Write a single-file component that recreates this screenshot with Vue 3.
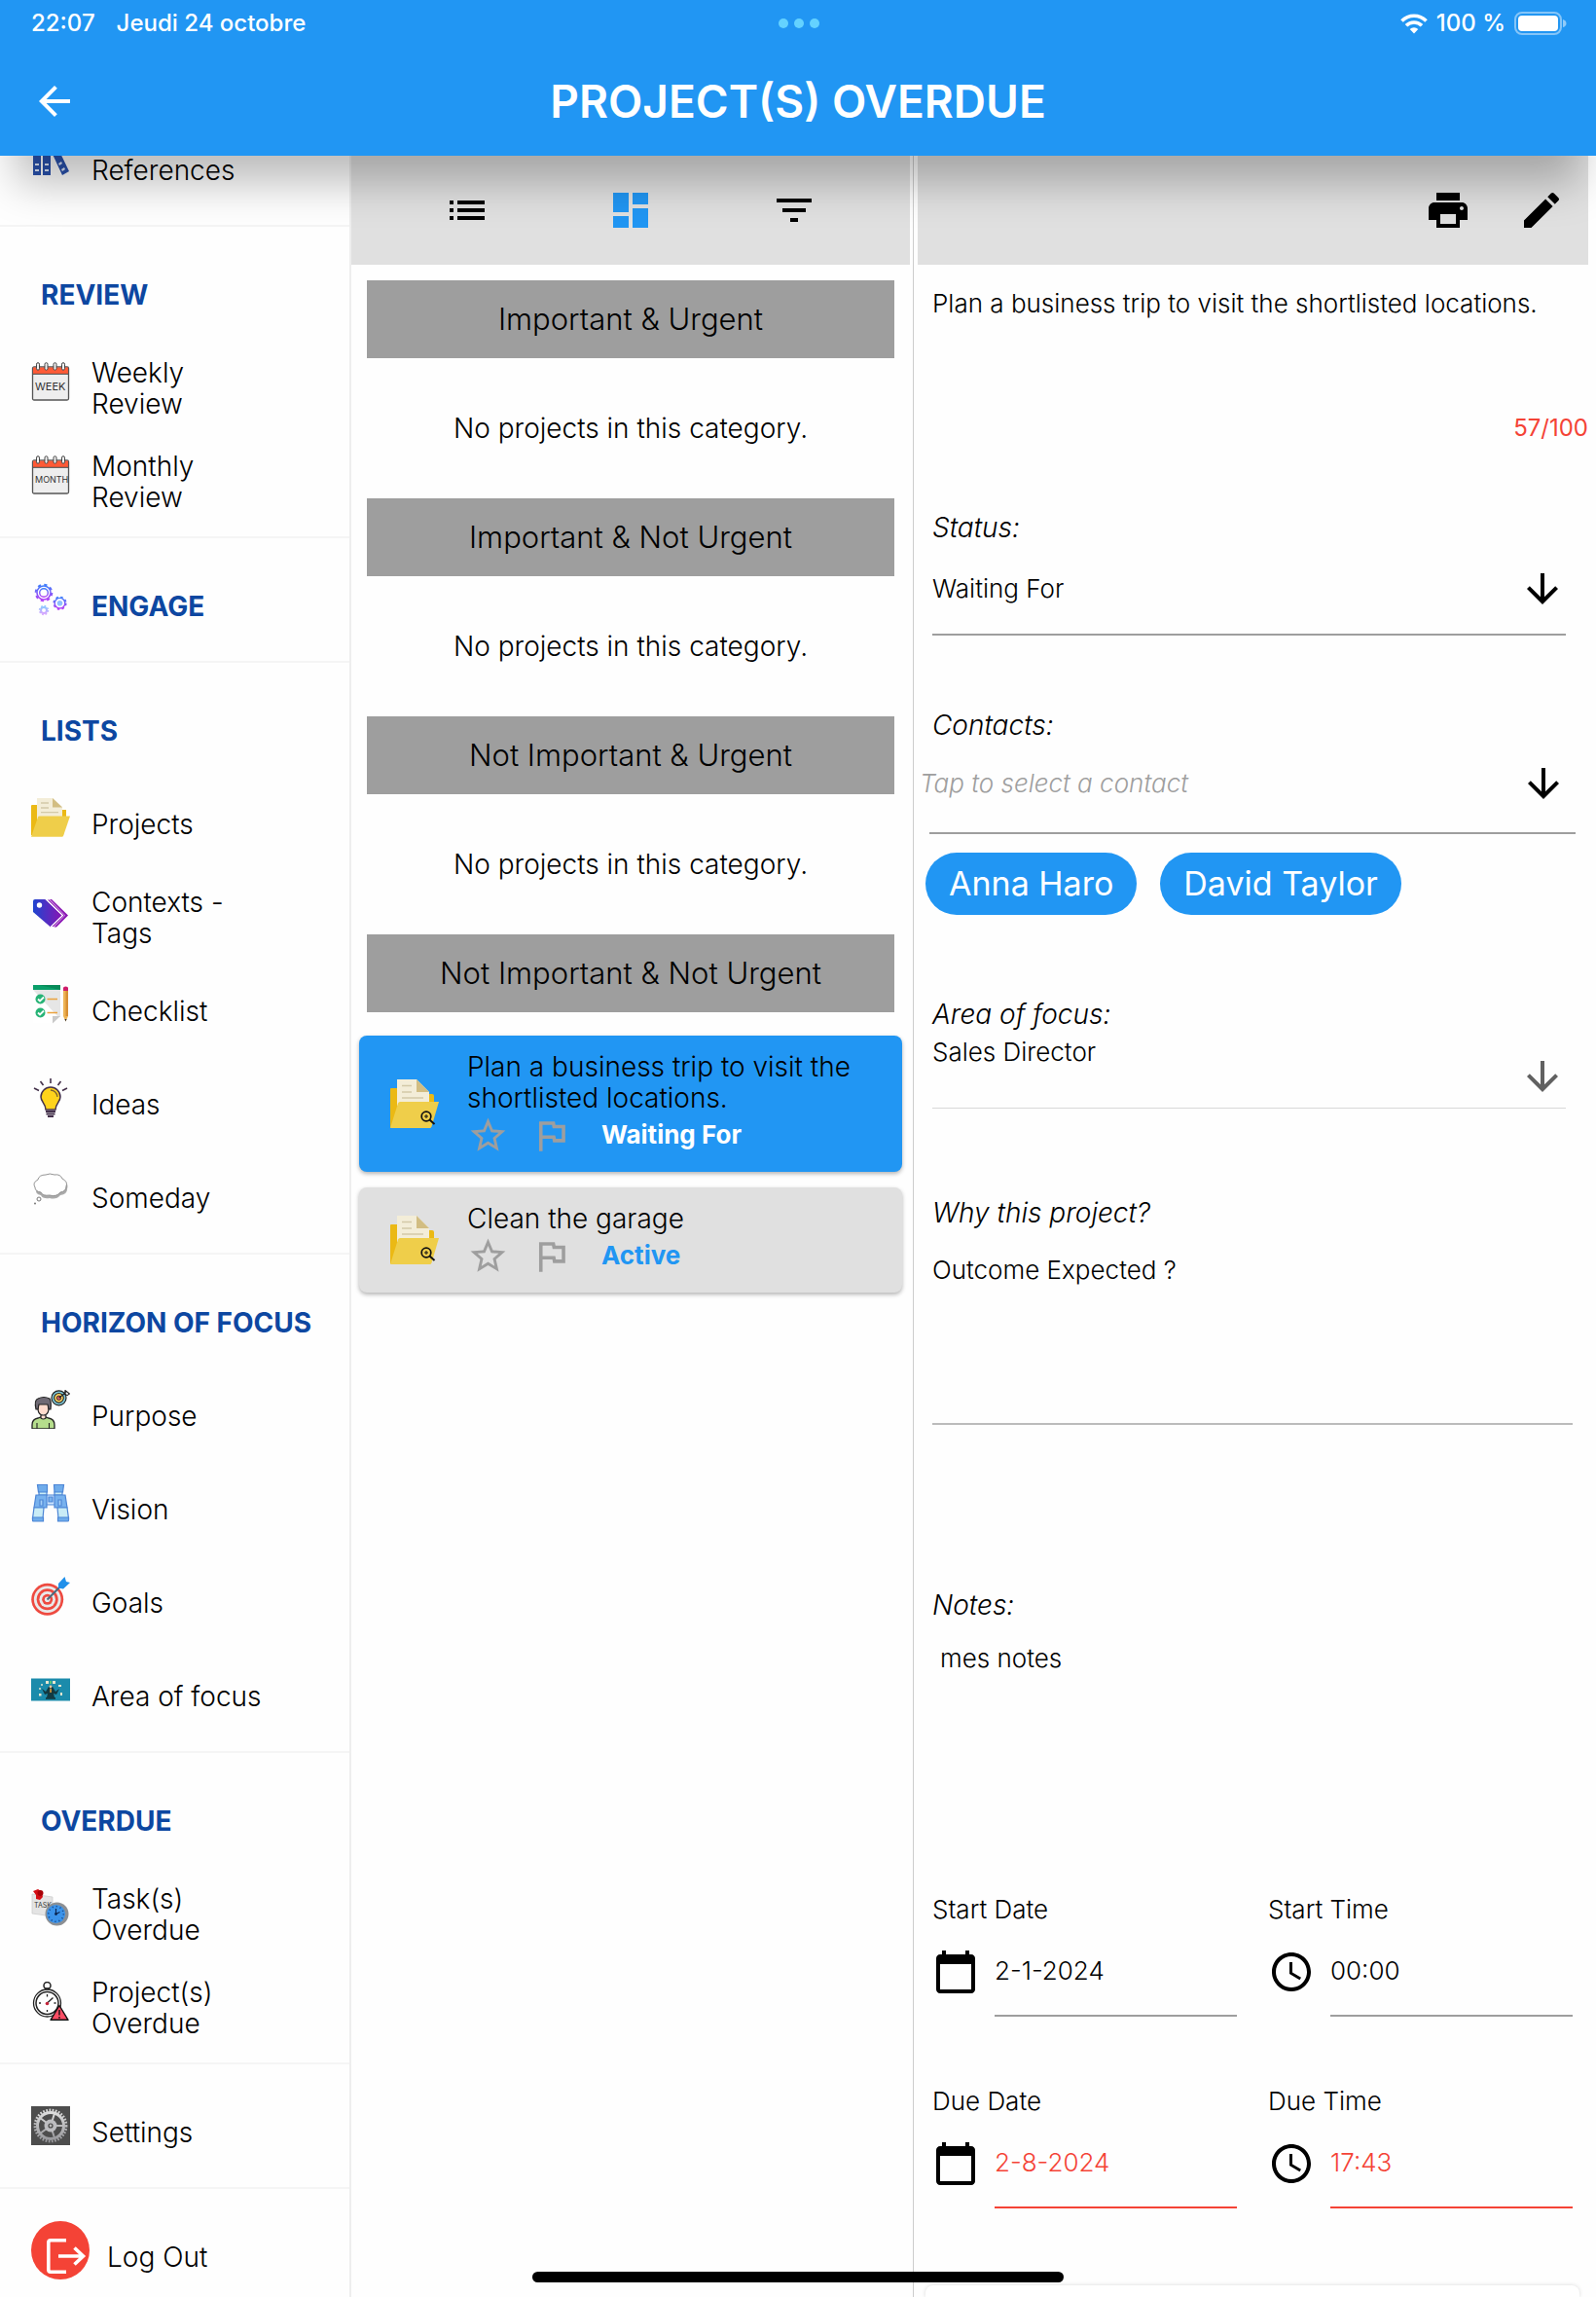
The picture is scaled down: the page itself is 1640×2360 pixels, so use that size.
<script setup>
import { ref, computed } from 'vue'

const sections = [
  { items: [{ icon: 'books', label: 'References' }] },
  {
    title: 'REVIEW',
    items: [
      { icon: 'calendar-page', label: 'Weekly\nReview', mark: { text: 'WEEK', x: 4, y: 29, size: 11 } },
      { icon: 'calendar-page', label: 'Monthly\nReview', mark: { text: 'MONTH', x: 4, y: 28, size: 9 } },
    ],
  },
  { lead: true, items: [{ icon: 'gears', label: 'ENGAGE', strong: true }] },
  {
    title: 'LISTS',
    items: [
      { icon: 'folder', label: 'Projects' },
      { icon: 'tags', label: 'Contexts -\nTags' },
      { icon: 'checklist', label: 'Checklist' },
      { icon: 'bulb', label: 'Ideas' },
      { icon: 'cloud', label: 'Someday' },
    ],
  },
  {
    title: 'HORIZON OF FOCUS',
    items: [
      { icon: 'purpose', label: 'Purpose' },
      { icon: 'binoculars', label: 'Vision' },
      { icon: 'target', label: 'Goals' },
      { icon: 'area', label: 'Area of focus' },
    ],
  },
  {
    title: 'OVERDUE',
    items: [
      { icon: 'note', label: 'Task(s)\nOverdue', mark: { text: 'TASK', x: 3, y: 20, size: 7 }, badge: 'note-clock' },
      { icon: 'stopwatch', label: 'Project(s)\nOverdue' },
    ],
  },
  { lead: true, items: [{ icon: 'settings', label: 'Settings' }] },
  { lead: true, items: [{ icon: 'logout', label: 'Log Out', large: true }] },
]

const emptyQuadrants = ['Important & Urgent', 'Important & Not Urgent', 'Not Important & Urgent']

const projects = [
  { name: 'Plan a business trip to visit the shortlisted locations.', status: 'Waiting For', selected: true },
  { name: 'Clean the garage', status: 'Active', selected: false },
]

const title = ref('Plan a business trip to visit the shortlisted locations.')
const savedLength = 57
const counter = computed(() => `${savedLength}/100`)
const status = ref('Waiting For')
const contact = ref('')
const contacts = ['Anna Haro', 'David Taylor']
const area = ref('Sales Director')
const outcome = ref('Outcome Expected ?')
const notes = ref('mes notes')

const schedule = ref([
  { id: 'start-date', label: 'Start Date', icon: 'calendar', value: '2-1-2024' },
  { id: 'start-time', label: 'Start Time', icon: 'clock', value: '00:00' },
  { id: 'due-date', label: 'Due Date', icon: 'calendar', value: '2-8-2024', late: true },
  { id: 'due-time', label: 'Due Time', icon: 'clock', value: '17:43', late: true },
])
</script>

<template>
  <div class="app">
    <svg class="sprite" aria-hidden="true">
      <defs>
        <linearGradient id="g-gear" x1="0" y1="0" x2="0" y2="1">
          <stop offset="0" stop-color="#3f7dfb" /><stop offset="1" stop-color="#b53df5" />
        </linearGradient>
        <linearGradient id="g-gear-soft" x1="0" y1="0" x2="0" y2="1">
          <stop offset="0" stop-color="#8fc6ff" /><stop offset="1" stop-color="#d6a6ff" />
        </linearGradient>
        <linearGradient id="g-tag" x1="0" y1="0" x2="1" y2="0">
          <stop offset="0" stop-color="#1f45cf" /><stop offset="1" stop-color="#8a14b4" />
        </linearGradient>
        <linearGradient id="g-metal" x1="0" y1="0" x2="0" y2="1">
          <stop offset="0" stop-color="#dcdcdc" /><stop offset="1" stop-color="#9a9a9e" />
        </linearGradient>
      </defs>

      <symbol id="i-books" viewBox="0 0 40 40">
        <g fill="#2a52ad">
          <path d="M2 0h8v32H2zM12 0h8v32h-8zM19 4l7-3 13 27-7 4z" />
        </g>
        <g fill="#dfe8fb">
          <path d="M4 20h4v2H4zM4 26h4v2H4zM14 20h4v2h-4zM14 26h4v2h-4zM28 20l3-2 1 2-3 2zM31 26l3-2 1 2-3 2z" />
        </g>
      </symbol>

      <symbol id="i-calendar-page" viewBox="0 0 40 40">
        <rect x="1.5" y="5" width="37" height="34" rx="1.5" fill="#eee" stroke="#555" stroke-width="1.3" />
        <path d="M2 5.500h36V12H2z" fill="#ff5a36" />
        <path d="M2 12.300h36" stroke="#444" stroke-width="1" />
        <g fill="#f4f4f4" stroke="#444" stroke-width="1">
          <rect x="5.500" y=".7" width="3" height="7.500" rx="1.500" />
          <rect x="14" y=".7" width="3" height="7.500" rx="1.500" />
          <rect x="23" y=".7" width="3" height="7.500" rx="1.500" />
          <rect x="31.500" y=".7" width="3" height="7.500" rx="1.500" />
        </g>
      </symbol>

      <symbol id="i-gears" viewBox="0 0 40 40">
        <g fill="none" stroke="url(#g-gear)">
          <circle cx="13" cy="13" r="7" stroke-width="1.600" />
          <circle cx="13" cy="13" r="8.300" stroke-width="2" stroke-dasharray="3.200 3.320" />
          <circle cx="13" cy="13" r="4.300" stroke-width="1.400" />
          <circle cx="29.500" cy="23.700" r="5.300" stroke-width="1.400" />
          <circle cx="29.500" cy="23.700" r="6.300" stroke-width="1.600" stroke-dasharray="2.500 2.450" />
        </g>
        <circle cx="29.500" cy="23.700" r="2.800" fill="#8fc0ff" />
        <g fill="none" stroke="url(#g-gear-soft)">
          <circle cx="13" cy="31" r="3" stroke-width="2" />
          <circle cx="13" cy="31" r="4.400" stroke-width="1.600" stroke-dasharray="1.700 1.750" />
        </g>
      </symbol>

      <symbol id="i-folder" viewBox="0 0 40 40">
        <path d="M0 8q0-1 1-1h5v5h30v10L33 38H0z" fill="#ebb914" />
        <path d="M6 0h16l10 9v13H6z" fill="#f3edd8" />
        <path d="M22 0l10 9.500H22z" fill="#d2bd82" />
        <path d="M10 5h8M10 10h8M10 14.700h18" stroke="#d3c9a8" stroke-width="1.300" fill="none" />
        <path d="M8.500 18.500H40L33 39q-.4.700-1.200.7H0L7 19.500q.4-1 1.500-1z" fill="#efce4a" />
      </symbol>
      <symbol id="i-folder-zoom" viewBox="0 0 50 50">
        <path d="M0 10q0-1 1-1h7v6h35q2 0 2 2v14L40 49H0z" fill="#ebb914" />
        <path d="M7 0h20l13 13v14H7z" fill="#f3edd8" />
        <path d="M27 0l13 13H27z" fill="#d2bd82" />
        <path d="M12 6.500h10M12 13h10M12 19h22" stroke="#d3c9a8" stroke-width="1.700" fill="none" />
        <path d="M10 23h40l-7.500 25.500q-.5 1.500-2 1.500H0l8-25.500Q8.500 23 10 23z" fill="#efce4a" />
        <g fill="none" stroke="#111"><circle cx="37" cy="38" r="4.800" stroke-width="1.700" /><path d="M40.500 41.500l5 4.500" stroke-width="2" /><path d="M37 36v4M35 38h4" stroke-width="1" /></g>
      </symbol>

      <symbol id="i-tags" viewBox="0 0 40 40">
        <path d="M4 8h10.500L32 24.500 20 36.500 2 21V10q0-2 2-2z" fill="url(#g-tag)" />
        <circle cx="8.500" cy="14" r="2.700" fill="#fff" />
        <path d="M15.500 8h3.500l16.500 16.500-12 12h-2.500l-.5-.5L32.500 24.500z" fill="#8a14b4" stroke="#fff" stroke-width="1.200" />
        <path d="M19 8h2L38 24.500l-12 12h-2.500L35 24.500z" fill="#8a14b4" />
      </symbol>

      <symbol id="i-checklist" viewBox="0 0 40 40">
        <path d="M2 4h28v28l-8 7H2z" fill="#fff" />
        <path d="M2 5h28v28H28z" fill="#e6e6e6" />
        <path d="M22 32h8l-8 7.500z" fill="#c9c9c9" />
        <path d="M2 0h28v5H2z" fill="#0a9f6a" /><path d="M8 0h22v5z" fill="#078a58" />
        <g fill="#27b376"><circle cx="9.500" cy="14.500" r="5" /><circle cx="9.500" cy="28.500" r="5" /></g>
        <path d="M7 14.500l2 2 4-4M7 28.500l2 2 4-4" fill="none" stroke="#fff" stroke-width="1.800" />
        <path d="M16.500 14.500H27M16.500 28.500H27" stroke="#eaa23f" stroke-width="1.400" />
        <path d="M33 6h5v26l-2.500 5.500L33 32z" fill="#eeb455" /><path d="M35.500 6H38v26h-2.500z" fill="#d88f34" />
        <path d="M33 6V3q0-1.500 2.500-1.500T38 3v3z" fill="#cf1c6a" /><path d="M34.500 35h2l-1 2.500z" fill="#333" />
      </symbol>

      <symbol id="i-bulb" viewBox="0 0 40 40">
        <path d="M20 0v5M9.500 3l3 4M30.500 3l-3 4M3 10l5 2.500M37 10l-5 2.500" stroke="#43304a" stroke-width="1.600" />
        <path d="M20 9a10 10 0 0 0-10 10c0 5 5 7 5 13h10c0-6 5-8 5-13A10 10 0 0 0 20 9z" fill="#ffd31c" stroke="#43304a" stroke-width="1.500" />
        <path d="M20 12q6 .5 7 7" fill="none" stroke="#7d6330" stroke-width="1.300" />
        <path d="M15 34h10M15.500 36.500h9M17 39h6" stroke="#43304a" stroke-width="1.900" />
      </symbol>

      <symbol id="i-cloud" viewBox="0 0 40 40">
        <path d="M5 18q-3-5 3-8 1-5 8-5 4-4 9 0 6-1 8 4 6 3 4 9 0 5-7 6-4 5-11 3-7 1-9-3-6-1-5-6z" fill="#555" opacity=".5" />
        <path d="M4 16q-3-5 3-8 1-5 8-5 4-2 9 0 6-1 8 4 6 3 4 8 0 5-6 6-4 5-11 3-7 1-9-3-6-1-6-5z" fill="#fff" stroke="#888" stroke-width=".9" />
        <circle cx="8" cy="28" r="2" fill="#fff" stroke="#777" stroke-width="1" /><circle cx="4" cy="32.500" r="1" fill="#777" />
      </symbol>

      <symbol id="i-purpose" viewBox="0 0 40 40">
        <path d="M1 40v-4q0-6 6-7l3-1h5l3 1q6 1 6 7v4z" fill="#b5dd8c" stroke="#222" stroke-width="1.300" />
        <path d="M6 34v6M18.500 34v6" stroke="#222" stroke-width="1.100" />
        <path d="M7 14h11v6q-.5 6-5.500 6T7 20zM10 25v4q2.500 2 5 0v-4" fill="#ffdccd" stroke="#222" stroke-width="1.200" />
        <path d="M5 20q-2-10 2-11 6-3 12 0 2 3 1 11h-2l-1-5H8l-1 5z" fill="#6f6a74" stroke="#222" stroke-width="1.200" />
        <circle cx="28.500" cy="8.300" r="7.500" fill="#7fc8d8" stroke="#222" stroke-width="1.200" />
        <circle cx="28.500" cy="8.300" r="4.800" fill="#ffd45c" stroke="#222" stroke-width="1.100" />
        <circle cx="28.500" cy="8.300" r="2.200" fill="#e4636c" stroke="#222" stroke-width=".9" />
        <path d="M28.500 8.300L36 2.500M34.500 4l.5-3.500 2.500 2L39.500 4l-2.500 1.700z" fill="#fff" stroke="#222" stroke-width="1.100" />
      </symbol>

      <symbol id="i-binoculars" viewBox="0 0 40 40">
        <g stroke="#4d86d6" stroke-width="1.200">
          <path d="M14 12h12v10H14z" fill="#cfe6ff" /><path d="M18 14h4v5h-4z" fill="#7bb4ee" />
          <path d="M6.500 1.500h10V9q-5 2-9 0zM23.500 1.500h10L32.500 9q-4 2-8.500 0z" fill="#6faceb" />
          <path d="M8 9h8v3H8zM24 9h8v3h-8z" fill="#c9ecf6" />
          <path d="M5 12h11v13H3zM24 12h11l2 13H24z" fill="#78b2ee" />
          <path d="M3 25h10l-1 11H1.500zM27 25h10l1.500 11H28z" fill="#c9ecf6" />
          <path d="M1.500 35h11v4h-10q-1 0-1-1zM27.500 35h11v3q0 1-1 1h-10z" fill="#6faceb" />
          <path d="M9 17h3v6H9zM28 17h3v6h-3z" fill="#a5d0f7" />
        </g>
      </symbol>

      <symbol id="i-target" viewBox="0 0 40 40">
        <circle cx="16.700" cy="23.300" r="16.500" fill="#ee4a40" /><circle cx="16.700" cy="23.300" r="13.800" fill="#e9e9ea" />
        <circle cx="16.700" cy="23.300" r="11" fill="#ee4a40" /><circle cx="16.700" cy="23.300" r="8.300" fill="#e9e9ea" />
        <circle cx="16.700" cy="23.300" r="5.500" fill="#ee4a40" /><circle cx="16.700" cy="23.300" r="2.800" fill="#e9e9ea" />
        <path d="M16.500 23.500L32 8" stroke="#4a6b80" stroke-width="1.900" />
        <path d="M28 7l6.500-7L36 5l4 1-7 6.500-5-1z" fill="#2090ea" />
      </symbol>

      <symbol id="i-area" viewBox="0 0 40 40">
        <path d="M0 8.500h40v23H0z" fill="#1b8bab" />
        <g fill="#e8e6cf"><path d="M15 11h3v3h-3zM22 11h3v3h-3zM28 15h3v2h-3zM8 24h2.500v2.500H8zM30 23h2v3h-2z" /><circle cx="11" cy="15" r="1" /><circle cx="9" cy="19" r="1" /></g>
        <path d="M19 11h2v3h-2z" fill="#55c47a" />
        <path d="M18 17h4l3 5 4-3-3 6-3-1 1 4h-8l1-4-3 1-3-6 4 3z" fill="#123a42" /><path d="M15 28h10v1.800H15z" fill="#123a42" />
        <circle cx="20" cy="17" r="1.400" fill="#f0c39a" /><path d="M19.300 19h1.500v4h-1.500z" fill="#e9a13a" />
      </symbol>

      <symbol id="i-note" viewBox="0 0 40 40">
        <path d="M1 6l21 3v20L1 26z" fill="#e4e4e4" stroke="#c8c8c8" stroke-width=".7" />
      </symbol>
      <symbol id="i-note-clock" viewBox="0 0 40 40">
        <circle cx="26.500" cy="26.500" r="12" fill="#8c8f93" /><circle cx="25.500" cy="26.500" r="9.500" fill="#3b93ea" />
        <circle cx="25.500" cy="26.500" r="7.800" fill="none" stroke="#123c78" stroke-width="1.600" stroke-dasharray="1 3.080" />
        <path d="M25.500 26.500V21M25.500 26.500l4-2" stroke="#0a2550" stroke-width="1.200" /><circle cx="25.500" cy="26.500" r="1.400" fill="#0a2550" />
        <path d="M2 3l5-2 5 3-1 2 1 3-3 3-4-1 0-4z" fill="#d50d14" /><circle cx="9.500" cy="5" r="3" fill="#a80007" />
      </symbol>

      <symbol id="i-stopwatch" viewBox="0 0 40 40">
        <g fill="none" stroke="#222"><circle cx="16.500" cy="4" r="3.500" stroke-width="1.500" /><circle cx="16.500" cy="22" r="14" stroke-width="1.300" /><circle cx="16.500" cy="22" r="11.500" stroke-width="1.500" />
          <path d="M14 7h5M16.500 13v2.500M16.500 29v2M8 22h2M23.500 22h2M16.500 22l6-5.500" stroke-width="1.300" /></g>
        <circle cx="16.500" cy="22.500" r="1.800" fill="#c22439" />
        <path d="M29 24.500L38 39.300H20z" fill="#fb4d64" stroke="#111" stroke-width="1.400" stroke-linejoin="round" />
        <path d="M29 29v5.500M29 36v1.700" stroke="#111" stroke-width="1.400" />
      </symbol>

      <symbol id="i-settings" viewBox="0 0 40 40">
        <path d="M0 0h40v40H0z" fill="#4d4d4d" />
        <g fill="none" stroke="url(#g-metal)"><circle cx="20" cy="20" r="13.500" stroke-width="3" /><circle cx="20" cy="20" r="16" stroke-width="2.800" stroke-dasharray="1.700 1.490" />
          <path d="M20.100 20L33 20.100M20 20l4-12.500M20 20L9.500 12.300M20 20L9.500 27.700M20 20l4 12.500" stroke-width="2" /></g>
        <circle cx="20" cy="20" r="6.500" fill="#bdbdc0" /><circle cx="20" cy="20" r="2" fill="#bbb" stroke="#444" stroke-width="1.200" />
      </symbol>

      <symbol id="i-logout" viewBox="0 0 60 60">
        <circle cx="30" cy="30" r="30" fill="#f44336" />
        <path d="M36 19.800H20q-2.200 0-2.200 2.200v28q0 2.200 2.200 2.200h16M28 36h25M44.500 27.500L53.500 36l-9 8.500" fill="none" stroke="#fff" stroke-width="3.600" />
      </symbol>

      <symbol id="i-back" viewBox="0 0 24 24"><path d="M20 11H7.830l5.590-5.590L12 4l-8 8 8 8 1.410-1.410L7.830 13H20z" /></symbol>
      <symbol id="i-down" viewBox="0 0 24 24"><path d="M20 12l-1.410-1.410L13 16.170V4h-2v12.170l-5.580-5.590L4 12l8 8z" /></symbol>
      <symbol id="i-list" viewBox="0 0 24 24"><path d="M3 13h2v-2H3zm0 4h2v-2H3zm0-8h2V7H3zm4 4h14v-2H7zm0 4h14v-2H7zM7 7v2h14V7z" /></symbol>
      <symbol id="i-board" viewBox="0 0 24 24"><path d="M3 13h8V3H3zm0 8h8v-6H3zm10 0h8V11h-8zm0-18v6h8V3z" /></symbol>
      <symbol id="i-filter" viewBox="0 0 24 24"><path d="M10 18h4v-2h-4zM3 6v2h18V6zm3 7h12v-2H6z" /></symbol>
      <symbol id="i-print" viewBox="0 0 24 24"><path d="M19 8H5c-1.660 0-3 1.340-3 3v6h4v4h12v-4h4v-6c0-1.660-1.340-3-3-3zm-3 11H8v-5h8zm3-7c-.55 0-1-.45-1-1s.45-1 1-1 1 .45 1 1-.45 1-1 1zm-1-9H6v4h12z" /></symbol>
      <symbol id="i-edit" viewBox="0 0 24 24"><path d="M3 17.250V21h3.750L17.810 9.940l-3.750-3.750zM20.710 7.040c.39-.39.39-1.020 0-1.410l-2.340-2.340c-.39-.39-1.020-.39-1.410 0l-1.830 1.830 3.750 3.750z" /></symbol>
      <symbol id="i-star" viewBox="0 0 24 24"><path d="M22 9.240l-7.190-.62L12 2 9.190 8.630 2 9.240l5.460 4.730L5.820 21 12 17.270 18.180 21l-1.630-7.030zM12 15.400l-3.760 2.270 1-4.280-3.320-2.880 4.380-.38L12 6.100l1.710 4.040 4.380.38-3.320 2.880 1 4.280z" /></symbol>
      <symbol id="i-flag" viewBox="0 0 24 24"><path d="M12.360 6l.4 2H18v6h-3.360l-.4-2H7V6zM14 4H5v17h2v-7h5.600l.4 2h7V6h-5.600z" fill-rule="evenodd" /></symbol>
      <symbol id="i-calendar" viewBox="0 0 24 24"><path d="M20 3h-1V1h-2v2H7V1H5v2H4c-1.100 0-2 .9-2 2v16c0 1.100.9 2 2 2h16c1.100 0 2-.9 2-2V5c0-1.100-.9-2-2-2zm0 18H4V8h16z" /></symbol>
      <symbol id="i-clock" viewBox="0 0 24 24"><path d="M11.990 2C6.470 2 2 6.480 2 12s4.470 10 9.990 10C17.520 22 22 17.520 22 12S17.520 2 11.990 2zM12 20c-4.420 0-8-3.580-8-8s3.580-8 8-8 8 3.580 8 8-3.580 8-8 8zm.5-13H11v6l5.250 3.150.75-1.230-4.500-2.670z" /></symbol>
    </svg>

    <header class="topbar">
      <div class="statusbar">
        <div class="status-left"><span>22:07</span><span>Jeudi 24 octobre</span></div>
        <div class="dots"><i></i><i></i><i></i></div>
        <div class="status-right">
          <svg class="wifi" viewBox="0 0 28 21" aria-hidden="true">
            <g fill="none" stroke="#fff" stroke-width="3.600"><path d="M1.500 7.500a17.500 17.500 0 0 1 25 0" /><path d="M6 12.300a11.300 11.300 0 0 1 16 0" /></g>
            <path d="M14 20.500l-4.300-4.600a6.200 6.200 0 0 1 8.600 0z" fill="#fff" />
          </svg>
          <span>100 %</span>
          <svg class="battery" viewBox="0 0 54 24" aria-hidden="true">
            <rect x="1" y="1" width="47" height="22" rx="7" fill="none" stroke="#fff" stroke-opacity=".45" stroke-width="2" />
            <rect x="4" y="4" width="41" height="16" rx="4" fill="#fff" />
            <path d="M50 8q3.500 1 3.500 4T50 16z" fill="#fff" fill-opacity=".5" />
          </svg>
        </div>
      </div>
      <div class="titlebar">
        <button class="icon-btn" type="button" aria-label="Back"><svg><use href="#i-back" /></svg></button>
        <h1>PROJECT(S) OVERDUE</h1>
      </div>
    </header>

    <div class="columns">
      <nav class="sidebar">
        <section v-for="(section, i) in sections" :key="i" class="group" :class="{ scrolled: i === 0, lead: section.lead || section.title }">
          <h2 v-if="section.title">{{ section.title }}</h2>
          <a v-for="item in section.items" :key="item.label" href="#" class="nav-item" :class="{ strong: item.strong, large: item.large }">
            <svg aria-hidden="true">
              <use :href="'#i-' + item.icon" />
              <text v-if="item.mark" class="mark" :x="item.mark.x" :y="item.mark.y" :font-size="item.mark.size">{{ item.mark.text }}</text>
              <use v-if="item.badge" :href="'#i-' + item.badge" />
            </svg>
            <span>{{ item.label }}</span>
          </a>
        </section>
      </nav>

      <main class="board">
        <div class="toolbar views">
          <button class="icon-btn" type="button" aria-label="List view"><svg><use href="#i-list" /></svg></button>
          <button class="icon-btn active" type="button" aria-label="Matrix view"><svg><use href="#i-board" /></svg></button>
          <button class="icon-btn" type="button" aria-label="Filter"><svg><use href="#i-filter" /></svg></button>
        </div>
        <section v-for="name in emptyQuadrants" :key="name" class="quadrant">
          <h3>{{ name }}</h3>
          <p>No projects in this category.</p>
        </section>
        <section class="quadrant">
          <h3>Not Important &amp; Not Urgent</h3>
          <div class="cards">
            <article v-for="p in projects" :key="p.name" class="card" :class="{ selected: p.selected }">
              <svg class="card-icon" aria-hidden="true"><use href="#i-folder-zoom" /></svg>
              <div class="card-body">
                <h4>{{ p.name }}</h4>
                <div class="card-meta">
                  <button type="button" aria-label="Favourite"><svg><use href="#i-star" /></svg></button>
                  <button type="button" aria-label="Flag"><svg><use href="#i-flag" /></svg></button>
                  <strong>{{ p.status }}</strong>
                </div>
              </div>
            </article>
          </div>
        </section>
      </main>

      <aside class="details">
        <div class="toolbar actions">
          <button class="icon-btn" type="button" aria-label="Print"><svg><use href="#i-print" /></svg></button>
          <button class="icon-btn" type="button" aria-label="Edit"><svg><use href="#i-edit" /></svg></button>
        </div>
        <form class="form" @submit.prevent>
          <textarea v-model="title" class="title-field" aria-label="Project title"></textarea>
          <output class="counter">{{ counter }}</output>

          <label class="caption status-caption" for="status">Status:</label>
          <div class="pick status-pick">
            <select id="status" v-model="status"><option>Waiting For</option><option>Active</option></select>
            <svg aria-hidden="true"><use href="#i-down" /></svg>
          </div>

          <label class="caption contact-caption" for="contact">Contacts:</label>
          <div class="pick contact-pick">
            <input id="contact" v-model="contact" type="text" placeholder="Tap to select a contact" />
            <svg aria-hidden="true"><use href="#i-down" /></svg>
          </div>
          <div class="chips">
            <button v-for="c in contacts" :key="c" type="button">{{ c }}</button>
          </div>

          <label class="caption area-caption" for="area">Area of focus:</label>
          <div class="pick area-pick">
            <select id="area" v-model="area"><option>Sales Director</option></select>
            <svg aria-hidden="true"><use href="#i-down" /></svg>
          </div>

          <label class="caption why-caption" for="why">Why this project?</label>
          <textarea id="why" v-model="outcome" class="why-field"></textarea>

          <label class="caption notes-caption" for="notes">Notes:</label>
          <textarea id="notes" v-model="notes" class="notes-field"></textarea>

          <div class="schedule">
            <div v-for="s in schedule" :key="s.id" class="slot" :class="{ late: s.late }">
              <label :for="s.id">{{ s.label }}</label>
              <div class="slot-row">
                <svg aria-hidden="true"><use :href="'#i-' + s.icon" /></svg>
                <input :id="s.id" v-model="s.value" type="text" />
              </div>
            </div>
          </div>
        </form>
        <div class="next-card"></div>
      </aside>
    </div>
    <div class="home-indicator"></div>
  </div>
</template>

<style>
body {
  margin: 0;
  background: #fff;
}
</style>

<style scoped>
.app,
.app * {
  box-sizing: border-box;
}
.app {
  position: relative;
  display: flex;
  flex-direction: column;
  height: 100vh;
  overflow: hidden;
  background: #fefefe;
  color: #000;
  font-family: Inter, "Open Sans", sans-serif;
  font-size: 26px;
  line-height: 32px;
}
.sprite {
  position: absolute;
  width: 0;
  height: 0;
}
h1, h2, h3, h4, p {
  margin: 0;
}
button, input, select, textarea {
  margin: 0;
  padding: 0;
  border: 0;
  background: none;
  color: inherit;
  font: inherit;
  appearance: none;
  border-radius: 0;
}
textarea {
  display: block;
  width: 100%;
  resize: none;
  overflow: hidden;
}
svg {
  display: block;
  flex: none;
  fill: currentColor;
}
.icon-btn,
.icon-btn svg {
  width: 48px;
  height: 48px;
}

/* Top bar */
.topbar {
  position: relative;
  z-index: 2;
  flex: none;
  height: 160px;
  background: #2196f3;
  color: #fff;
  box-shadow: 0 44px 44px -16px rgba(0, 0, 0, 0.26);
}
.statusbar {
  display: grid;
  grid-template-columns: 1fr auto 1fr;
  align-items: center;
  height: 48px;
  padding: 0 30px 0 32px;
  font-weight: 500;
  font-size: 24px;
}
.status-left,
.status-right,
.dots {
  display: flex;
  align-items: center;
}
.status-left {
  gap: 22px;
}
.status-right {
  justify-content: flex-end;
  gap: 9px;
}
.dots {
  gap: 6px;
}
.dots i {
  width: 10px;
  height: 10px;
  border-radius: 50%;
  background: #64d2ff;
}
.wifi {
  width: 28px;
  height: 21px;
}
.battery {
  width: 54px;
  height: 24px;
}
.titlebar {
  display: grid;
  grid-template-columns: 1fr auto 1fr;
  align-items: center;
  height: 112px;
  padding: 0 32px;
}
h1 {
  font-size: 46px;
  line-height: 56px;
  font-weight: 600;
}

/* Columns */
.columns {
  flex: 1;
  min-height: 0;
  display: grid;
  grid-template-columns: 361fr 578fr 701fr;
}
.columns > * {
  min-width: 0;
  overflow: hidden;
}

/* Sidebar */
.sidebar {
  border-right: 2px solid #eee;
}
.group {
  padding-bottom: 8px;
  border-bottom: 2px solid #f5f5f5;
}
.group.lead {
  padding-top: 22px;
}
.group.scrolled {
  margin-top: -33px;
}
.group:last-child {
  border-bottom: 0;
}
h2 {
  padding-left: 42px;
  color: #0d47a1;
  font-size: 28px;
  line-height: 96px;
  font-weight: 700;
  white-space: nowrap;
}
.nav-item {
  display: flex;
  align-items: center;
  gap: 22px;
  height: 96px;
  padding-left: 32px;
  color: #000;
  font-size: 28px;
  font-weight: 300;
  text-decoration: none;
  white-space: pre-line;
}
.nav-item svg {
  width: 40px;
  height: 40px;
  margin-bottom: 14px;
}
.mark {
  fill: #333;
  font-weight: 400;
}
.nav-item.strong {
  color: #0d47a1;
  font-weight: 700;
}
.nav-item.large {
  gap: 18px;
}
.nav-item.large svg {
  width: 60px;
  height: 60px;
}

/* Board */
.board {
  border-right: 1px solid #ccc;
}
.toolbar {
  display: flex;
  align-items: center;
  height: 112px;
  background: #e0e0e0;
}
.views {
  justify-content: center;
  gap: 120px;
  margin-right: 3px;
}
.icon-btn.active {
  color: #2196f3;
}
.quadrant h3 {
  margin: 16px 19px 0 16px;
  background: #9e9e9e;
  font-size: 31px;
  line-height: 80px;
  font-weight: 300;
  text-align: center;
}
.quadrant p {
  margin-right: 3px;
  font-size: 28px;
  line-height: 144px;
  font-weight: 300;
  text-align: center;
}
.quadrant + .quadrant h3 {
  margin-top: 0;
}
.cards {
  display: grid;
  gap: 16px;
  padding: 24px 11px 8px 8px;
}
.card {
  display: flex;
  align-items: center;
  gap: 29px;
  padding: 16px 32px;
  border-radius: 8px;
  background: #e0e0e0;
  box-shadow: 0 2px 4px rgba(0, 0, 0, 0.3);
}
.card-icon {
  width: 50px;
  height: 50px;
}
.card.selected {
  background: #2196f3;
}
h4 {
  font-size: 28px;
  font-weight: 300;
}
.card-meta {
  display: flex;
  align-items: center;
  height: 44px;
}
.card-meta button {
  margin-right: 22px;
  color: #9e9e9e;
}
.card-meta svg {
  width: 43px;
  height: 43px;
}
.card-meta strong {
  margin-left: 8px;
  color: #2196f3;
  font-weight: 700;
}
.card.selected strong {
  color: #fff;
}

/* Details */
.details {
  display: flex;
  flex-direction: column;
}
.actions {
  flex: none;
  justify-content: flex-end;
  gap: 48px;
  margin: 0 8px 0 4px;
  padding-right: 24px;
}
.form {
  flex: none;
  display: flex;
  flex-direction: column;
  padding: 0 24px 0 19px;
  font-weight: 300;
}
.title-field {
  height: 128px;
  margin-top: 24px;
}
.counter {
  align-self: flex-end;
  margin-right: -16px;
  color: #f44336;
  font-weight: 400;
  font-size: 24px;
}
.caption {
  font-size: 28px;
  font-style: italic;
}
.status-caption {
  margin-top: 70px;
}
.contact-caption {
  margin-top: 76px;
}
.area-caption {
  margin-top: 86px;
}
.why-caption {
  margin-top: 91px;
}
.notes-caption {
  margin-top: 169px;
}
.pick {
  display: grid;
  border-bottom: 2px solid #9e9e9e;
}
.pick > * {
  grid-area: 1 / 1;
  min-width: 0;
}
.pick > svg {
  place-self: center end;
  width: 48px;
  height: 48px;
  pointer-events: none;
}
.status-pick {
  height: 95px;
  margin-right: 7px;
}
.contact-pick {
  height: 96px;
  margin: 0 -3px;
  padding: 0 9px 6px 0;
}
.contact-pick input {
  margin-left: -10px;
  font-style: italic;
}
.contact-pick input::placeholder {
  color: #9e9e9e;
  opacity: 1;
}
.area-pick {
  height: 81px;
  margin-right: 7px;
  border-bottom: 1px solid #d8d8d8;
}
.area-pick select {
  padding-bottom: 34px;
}
.area-pick svg {
  align-self: end;
  margin-bottom: 8px;
  color: #616161;
}
.chips {
  display: flex;
  gap: 24px;
  margin: 19px 0 0 -7px;
}
.chips button {
  height: 64px;
  padding: 0 24px;
  border-radius: 32px;
  background: #2196f3;
  color: #fff;
  font-size: 34px;
  font-weight: 400;
}
.why-field {
  height: 175px;
  margin-top: 27px;
  border-bottom: 2px solid #bbb;
}
.notes-field {
  height: 140px;
  margin-top: 23px;
  padding-left: 8px;
}
.schedule {
  display: grid;
  grid-template-columns: repeat(2, minmax(0, 1fr));
  gap: 71px 32px;
  margin-top: 118px;
}
.slot label {
  display: block;
}
.slot-row {
  display: flex;
  align-items: center;
  gap: 16px;
  margin-top: 1px;
}
.slot svg {
  width: 48px;
  height: 48px;
}
.slot input {
  flex: 1;
  min-width: 0;
  height: 93px;
  border-bottom: 2px solid #9e9e9e;
}
.slot.late input {
  color: #f44336;
  border-color: #f44336;
}
.next-card {
  flex: 1;
  margin: 79px 17px 0 12px;
  border-radius: 8px 8px 0 0;
  background: #fff;
  box-shadow: 0 0 4px rgba(0, 0, 0, 0.15);
}
.home-indicator {
  position: absolute;
  z-index: 3;
  left: 50%;
  bottom: 15px;
  width: 34%;
  max-width: 546px;
  height: 11px;
  border-radius: 6px;
  background: #000;
  transform: translateX(-50%);
}
</style>
